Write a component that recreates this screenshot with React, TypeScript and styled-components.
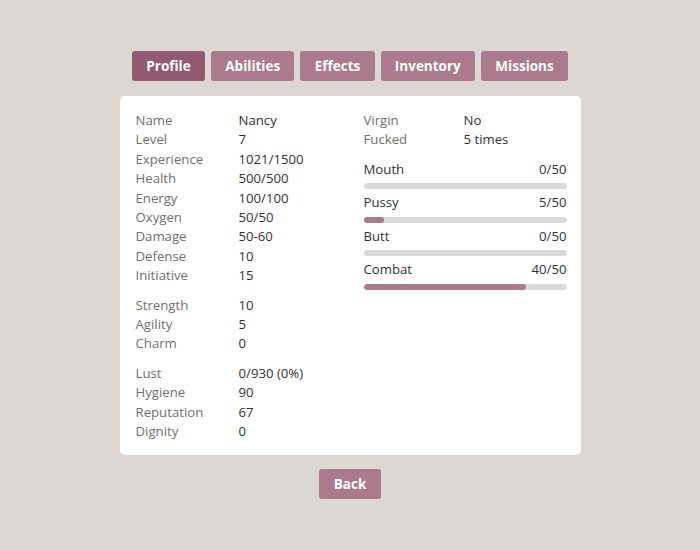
import styled, { createGlobalStyle } from "styled-components";

const GlobalStyle = createGlobalStyle`
  html, body {
    margin: 0;
    padding: 0;
    background: #dcd7d3;
    font-family: "Open Sans", "Liberation Sans", sans-serif;
  }
`;

const Page = styled.div`
  display: flex;
  flex-direction: column;
  align-items: center;
  padding-top: 51px;
  min-height: 550px;
  box-sizing: border-box;
`;

const Tabs = styled.div`
  display: flex;
  gap: 6px;
  margin-bottom: 15px;
`;

const Button = styled.button<{ $active?: boolean }>`
  height: 30px;
  padding: 0 14.3px;
  border: none;
  border-radius: 3px;
  background: ${(p) => (p.$active ? "#925a70" : "#ab7a8c")};
  color: #fff;
  font-family: "Open Sans", "Liberation Sans", sans-serif;
  font-weight: 700;
  font-size: 13.5px;
  cursor: pointer;
`;

const Panel = styled.div`
  width: 461px;
  box-sizing: border-box;
  background: #fff;
  border-radius: 5px;
  padding: 15px 14px 13px 16px;
  display: flex;
  margin-bottom: 14px;
`;

const LeftCol = styled.div`
  width: 228px;
  display: flex;
  flex-direction: column;
  gap: 10px;
`;

const RightCol = styled.div`
  width: 203px;
  display: flex;
  flex-direction: column;
`;

const Group = styled.div`
  display: flex;
  flex-direction: column;
`;

const Row = styled.div`
  display: flex;
  font-size: 13.2px;
  line-height: 19.4px;
`;

const Label = styled.span<{ $w: number }>`
  width: ${(p) => p.$w}px;
  color: #707070;
`;

const Value = styled.span`
  color: #333;
`;

const Skills = styled.div`
  margin-top: 10px;
  display: flex;
  flex-direction: column;
`;

const Skill = styled.div`
  display: flex;
  flex-direction: column;
`;

const SkillHead = styled.div`
  display: flex;
  justify-content: space-between;
  font-size: 13.2px;
  line-height: 19.5px;
  color: #333;
`;

const Track = styled.div`
  height: 6px;
  margin: 4px 0;
  border-radius: 3px;
  background: #dadada;
  overflow: hidden;
`;

const Fill = styled.div`
  height: 100%;
  border-radius: 3px;
  background: #ab7a8c;
`;

const groups: [string, string][][] = [
  [
    ["Name", "Nancy"],
    ["Level", "7"],
    ["Experience", "1021/1500"],
    ["Health", "500/500"],
    ["Energy", "100/100"],
    ["Oxygen", "50/50"],
    ["Damage", "50-60"],
    ["Defense", "10"],
    ["Initiative", "15"],
  ],
  [
    ["Strength", "10"],
    ["Agility", "5"],
    ["Charm", "0"],
  ],
  [
    ["Lust", "0/930 (0%)"],
    ["Hygiene", "90"],
    ["Reputation", "67"],
    ["Dignity", "0"],
  ],
];

const skills = [
  { name: "Mouth", value: 0, max: 50 },
  { name: "Pussy", value: 5, max: 50 },
  { name: "Butt", value: 0, max: 50 },
  { name: "Combat", value: 40, max: 50 },
];

const tabs = ["Profile", "Abilities", "Effects", "Inventory", "Missions"];

export default function App() {
  return (
    <>
      <GlobalStyle />
      <Page>
        <Tabs>
          {tabs.map((t, i) => (
            <Button key={t} $active={i === 0}>
              {t}
            </Button>
          ))}
        </Tabs>
        <Panel>
          <LeftCol>
            {groups.map((g, i) => (
              <Group key={i}>
                {g.map(([l, v]) => (
                  <Row key={l}>
                    <Label $w={103}>{l}</Label>
                    <Value>{v}</Value>
                  </Row>
                ))}
              </Group>
            ))}
          </LeftCol>
          <RightCol>
            <Group>
              <Row>
                <Label $w={100}>Virgin</Label>
                <Value>No</Value>
              </Row>
              <Row>
                <Label $w={100}>Fucked</Label>
                <Value>5 times</Value>
              </Row>
            </Group>
            <Skills>
              {skills.map((s) => (
                <Skill key={s.name}>
                  <SkillHead>
                    <span>{s.name}</span>
                    <span>
                      {s.value}/{s.max}
                    </span>
                  </SkillHead>
                  <Track>
                    <Fill style={{ width: `${(s.value / s.max) * 100}%` }} />
                  </Track>
                </Skill>
              ))}
            </Skills>
          </RightCol>
        </Panel>
        <Button>Back</Button>
      </Page>
    </>
  );
}
